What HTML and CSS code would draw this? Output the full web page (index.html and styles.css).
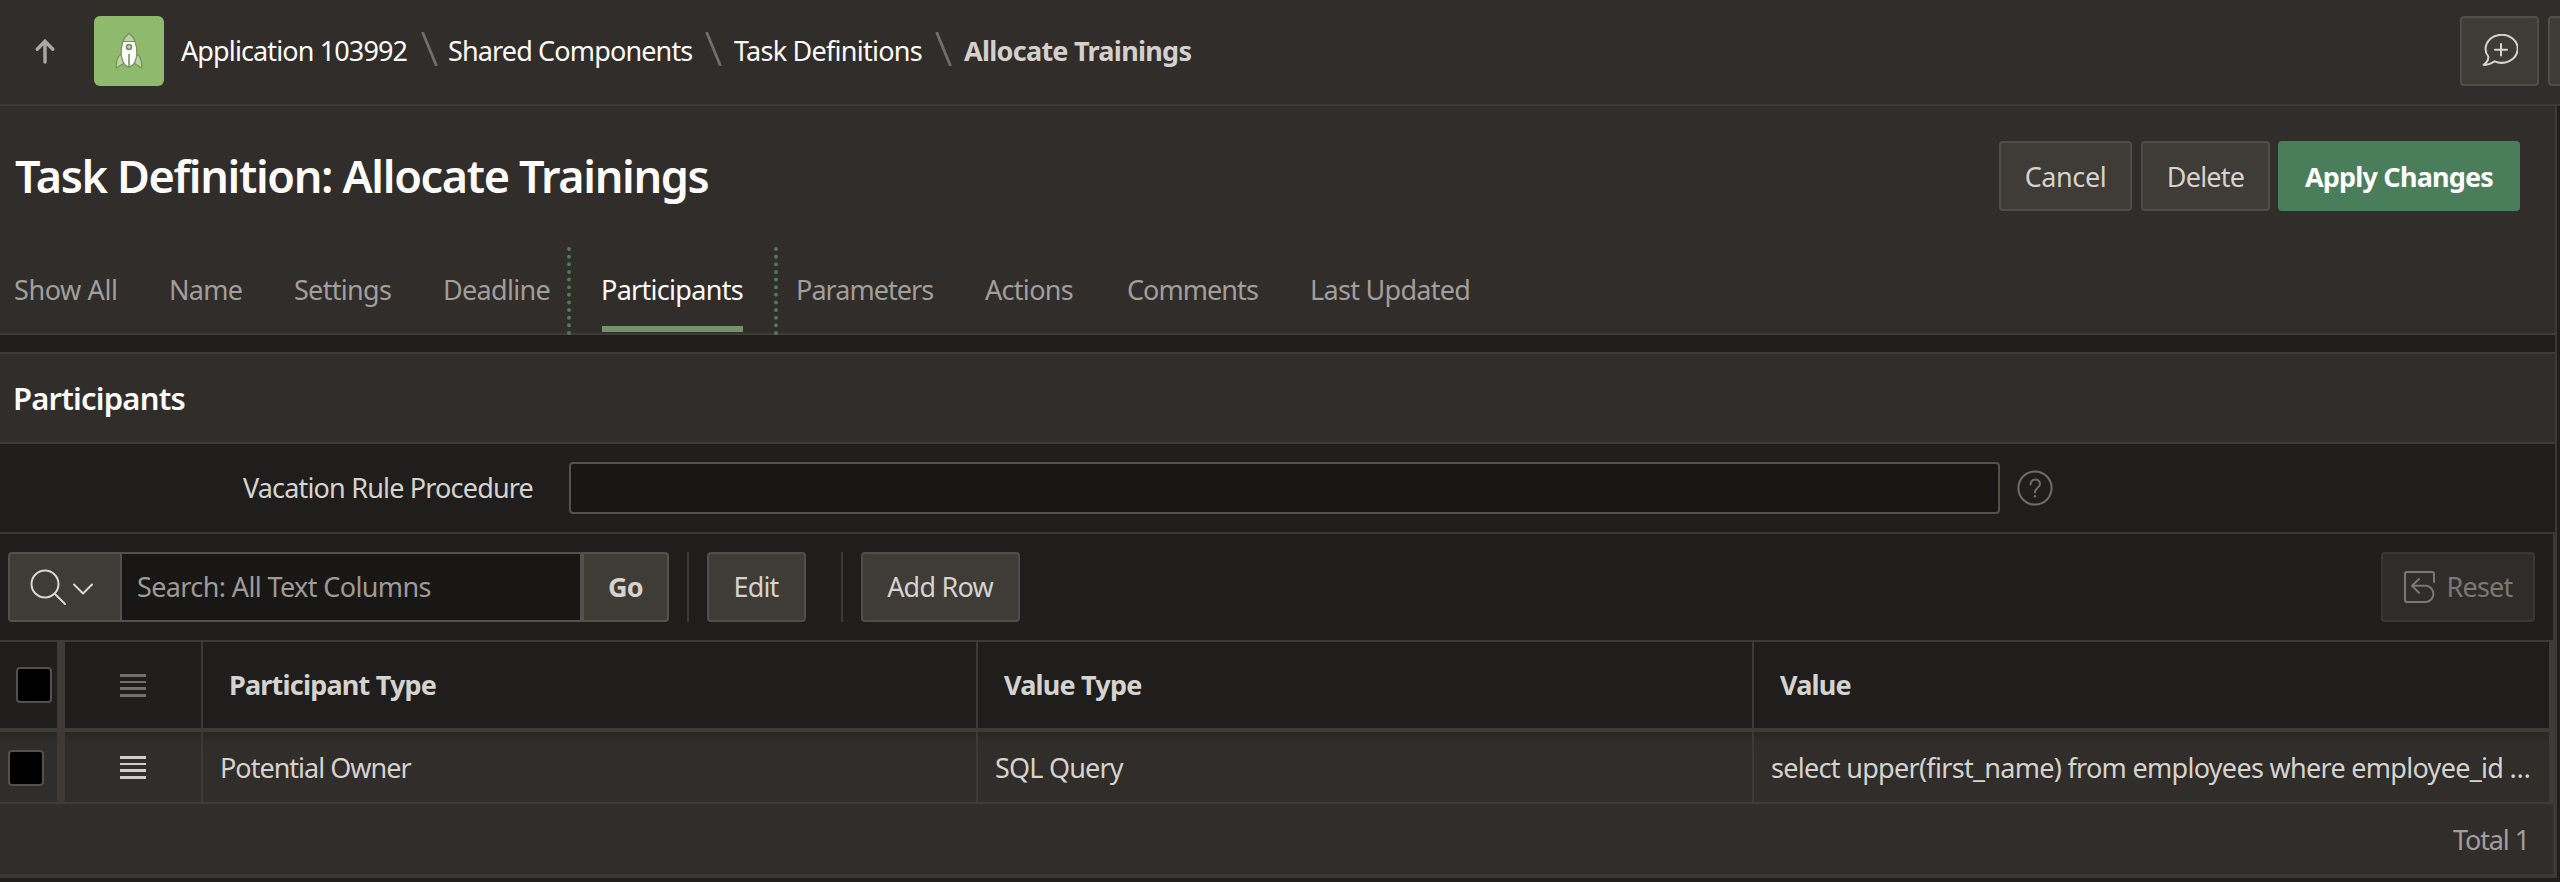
FILE: index.html
```html
<!DOCTYPE html>
<html lang="en">
<head>
<meta charset="utf-8">
<title>Task Definition: Allocate Trainings</title>
<link rel="stylesheet" href="styles.css">
</head>
<body>
<header class="topbar">
  <a class="up"><svg width="22" height="26" viewBox="0 0 22 26"><path d="M11 24V4M3.2 11.2L11 3.2l7.800 8" fill="none" stroke="#aaa7a5" stroke-width="3.400" stroke-linecap="round" stroke-linejoin="miter"/></svg></a>
  <span class="app-icon">
    <svg width="28" height="38" viewBox="0 0 28 38">
      <g stroke="#729457" stroke-width="1.200" stroke-linejoin="round">
        <path d="M7.500 21C3 24 1.200 27 1.200 36L8.500 31.500zM20.500 21c4.500 3 6.300 6 6.300 15l-7.300-4.500z" fill="#bcd5a8"/>
        <path d="M8 9.500h12c3 8 2.500 18-2.200 23.500q-3.800 3.500-7.600 0C5.500 27.500 5 17.500 8 9.500z" fill="#fff"/>
        <path d="M14 1.200c-3 2.400-5 5-6 8.300h12c-1-3.300-3-5.900-6-8.300z" fill="#bcd5a8"/>
        <circle cx="14" cy="15" r="2.500" fill="#bcd5a8" stroke-width="1.600"/>
        <path d="M14 22.500V35" stroke-width="1.600" stroke-linecap="round"/>
      </g>
    </svg>
  </span>
  <nav class="crumbs">
    <a class="crumb crumb-app">Application 103992</a>
    <svg class="slash" width="17" height="34" viewBox="0 0 17 34"><path d="M1.500 0L15.500 34" stroke="#726e6b" stroke-width="2.800"/></svg>
    <a class="crumb crumb-shared">Shared Components</a>
    <svg class="slash" width="17" height="34" viewBox="0 0 17 34"><path d="M1.500 0L15.500 34" stroke="#726e6b" stroke-width="2.800"/></svg>
    <a class="crumb crumb-tasks">Task Definitions</a>
    <svg class="slash" width="17" height="34" viewBox="0 0 17 34"><path d="M1.500 0L15.500 34" stroke="#726e6b" stroke-width="2.800"/></svg>
    <span class="crumb crumb-current">Allocate Trainings</span>
  </nav>
  <button class="btn btn-comment"><svg width="36" height="34" viewBox="0 0 36 34" fill="none" stroke="#d6d3d0" stroke-width="2" stroke-linejoin="round" stroke-linecap="round"><path d="M6.300 22.500A16 14 0 1 1 12.500 27.300C9.500 29.500 6 31.500 1.500 30.800C4.500 29 6.500 26 6.300 22.500z"/><path d="M19 10v11.500M13 15.700h12"/></svg></button>
  <button class="btn btn-next"></button>
</header>
<div class="page">
  <div class="title-bar">
    <h1>Task Definition: Allocate Trainings</h1>
    <button class="btn btn-cancel">Cancel</button>
    <button class="btn btn-delete">Delete</button>
    <button class="btn btn-apply">Apply Changes</button>
  </div>
  <nav class="tabs">
    <a class="tab show-all">Show All</a>
    <a class="tab">Name</a>
    <a class="tab">Settings</a>
    <a class="tab">Deadline</a>
    <a class="tab active">Participants</a>
    <a class="tab params">Parameters</a>
    <a class="tab">Actions</a>
    <a class="tab params">Comments</a>
    <a class="tab">Last Updated</a>
  </nav>
  <section class="region">
    <h2>Participants</h2>
    <div class="field">
      <label>Vacation Rule Procedure</label>
      <input class="field-input" type="text">
      <svg class="help" width="36" height="36" viewBox="0 0 36 36" fill="none" stroke="#6f6c69" stroke-width="2"><circle cx="18" cy="18" r="16.600"/><path d="M13.500 14.500c0-6.500 9.500-6.300 9.500-.6 0 4-5 3.600-5 8.600" stroke-linecap="round"/><circle cx="18" cy="26.300" r="1.300" fill="#6f6c69" stroke="none"/></svg>
    </div>
    <div class="grid">
      <div class="toolbar">
        <button class="btn btn-search"><svg width="64" height="38" viewBox="0 0 64 38" fill="none" stroke="#dad7d4" stroke-width="2" stroke-linecap="round" stroke-linejoin="round"><circle cx="15" cy="16" r="13.500"/><path d="M25 26L35 36M44 16.500l9 9 9-9"/></svg></button>
        <div class="search">Search: All Text Columns</div>
        <button class="btn btn-go">Go</button>
        <span class="divider"></span>
        <button class="btn btn-edit">Edit</button>
        <span class="divider divider-add"></span>
        <button class="btn btn-add">Add Row</button>
        <button class="btn btn-reset"><svg width="32" height="32" viewBox="0 0 32 32" fill="none" stroke="#7b7875" stroke-width="2" stroke-linecap="round" stroke-linejoin="round"><path d="M30 11V3q0-2-2-2H3Q1 1 1 3v26q0 2 2 2h19.500a8.200 8.200 0 0 0 0-16.200H8M15 8l-7 6.800 7 7"/></svg>Reset</button>
      </div>
      <div class="row head">
        <div class="cell check"><span class="box"></span></div>
        <div class="cell menu"><span class="lines"></span></div>
        <div class="cell type">Participant Type</div>
        <div class="cell">Value Type</div>
        <div class="cell last">Value</div>
      </div>
      <div class="row body">
        <div class="cell check"><span class="box"></span></div>
        <div class="cell menu"><span class="lines"></span></div>
        <div class="cell owner">Potential Owner</div>
        <div class="cell">SQL Query</div>
        <div class="cell last query">select upper(first_name) from employees where employee_id …</div>
      </div>
      <div class="total">Total 1</div>
    </div>
  </section>
</div>
</body>
</html>
```
FILE: styles.css
```css
* { box-sizing: border-box; }
body {
  margin: 0;
  height: 882px;
  overflow: hidden;
  background: #201e1c;
  color: #d5d3d0;
  font: 27px/36px "Noto Sans", "Open Sans", sans-serif;
  letter-spacing: -0.8px;
  white-space: nowrap;
}
svg { display: block; flex: none; }
h1, h2 { margin: 0; color: #fdfcfb; font-weight: 600; }

.btn {
  display: flex;
  flex: none;
  align-items: center;
  justify-content: center;
  height: 70px;
  padding: 0;
  border: 2px solid #524d48;
  border-radius: 4px;
  background: #3f3b36;
  color: #d5d3d0;
  font: inherit;
  letter-spacing: inherit;
}

/* Application bar */
.topbar {
  display: flex;
  align-items: flex-start;
  height: 106px;
  padding-top: 16px;
  border-bottom: 2px solid #3f3a37;
  background: #312d2a;
}
.up { padding: 22px 36px 0 34px; }
.app-icon {
  display: flex;
  align-items: center;
  justify-content: center;
  flex: none;
  width: 70px;
  height: 70px;
  margin-left: 2px;
  border-radius: 6px;
  background: #8fb96d;
}
.crumbs { display: flex; align-items: center; height: 70px; margin-left: 17px; flex: 1; }
.crumb { flex: none; color: #fdfcfb; }
.crumb-app { width: 240px; letter-spacing: -0.88px; }
.crumb-shared { width: 257px; margin-left: 10px; letter-spacing: -0.86px; }
.crumb-tasks { width: 201px; margin-left: 12px; letter-spacing: -0.75px; }
.crumb-current { margin-left: 12px; font-weight: 700; color: #d3d0ce; letter-spacing: -0.73px; }
.slash { margin-bottom: 4px; }
.btn-comment { width: 79px; margin-right: 9px; }
.btn-next { width: 12px; border-right: 0; border-radius: 4px 0 0 4px; }

/* Page title and actions */
.page { width: 2557px; border-right: 2px solid #3c3a34; }
.title-bar {
  display: flex;
  align-items: center;
  height: 141px;
  padding: 0 35px 1px 15px;
  background: #312d2a;
}
.title-bar h1 { flex: 1; font-size: 45px; line-height: 60px; letter-spacing: -1.35px; }
.title-bar .btn { padding-top: 2px; }
.btn-cancel { width: 133px; margin-right: 9px; letter-spacing: -0.4px; }
.btn-delete { width: 129px; margin-right: 8px; }
.btn-apply { width: 242px; border-color: #4a7d59; background: #4a7d59; color: #fff; font-weight: 700; }

/* Region tabs */
.tabs {
  display: grid;
  grid-template-columns: 155px 125px 149px 158px 195px 189px 142px 183px auto;
  height: 88px;
  padding-left: 14px;
  border-bottom: 2px solid #3f3b38;
  background: #312d2a;
}
.tab { color: #a19e9b; line-height: 86px; letter-spacing: -0.7px; }
.show-all { letter-spacing: -0.4px; }
.params { letter-spacing: -0.95px; }
.tab.active { position: relative; color: #fdfcfb; }
.tab.active::before {
  content: "";
  position: absolute;
  top: 0;
  left: -34px;
  width: 203px;
  height: 88px;
  border: dotted #4a7d59;
  border-width: 0 4px;
}
.tab.active::after {
  content: "";
  position: absolute;
  left: 1px;
  bottom: 1px;
  width: 141px;
  height: 6px;
  background: #75926a;
}

/* Participants region */
.region { margin-top: 17px; border-top: 2px solid #3f3b38; }
.region h2 {
  height: 90px;
  padding-left: 13px;
  border-bottom: 2px solid #3f3b38;
  background: #312d2a;
  font-size: 31px;
  line-height: 88px;
}
.field { display: flex; align-items: center; height: 90px; border-bottom: 2px solid #3c3a34; }
.field label { width: 533px; text-align: right; letter-spacing: -0.82px; }
.field-input {
  width: 1431px;
  height: 52px;
  margin: 0 17px 0 36px;
  border: 2px solid #574f49;
  border-radius: 4px;
  background: #191715;
}

/* Grid toolbar */
.grid { border-right: 2px solid #3c3a34; }
.toolbar { display: flex; align-items: center; height: 108px; padding: 0 18px 0 8px; border-bottom: 2px solid #3c3a34; }
.btn-search { width: 114px; padding-right: 7px; border-radius: 4px 0 0 4px; border-color: #57504a; }
.search {
  width: 458px;
  height: 70px;
  padding-left: 15px;
  border: solid #57504a;
  border-width: 2px 0;
  background: #191715;
  color: #9d9a97;
  line-height: 66px;
  letter-spacing: -0.62px;
}
.btn-go { width: 89px; border-width: 2px 2px 2px 4px; border-color: #57504a; border-radius: 0 4px 4px 0; font-weight: 700; }
.divider { width: 2px; height: 70px; margin: 0 18px; background: #3c3a34; }
.btn-edit { width: 99px; padding-right: 1px; }
.divider-add { margin-left: 35px; }
.btn-add { width: 159px; padding-right: 1px; }
.btn-reset { width: 154px; gap: 11px; margin-left: auto; border-color: #393633; background: #302c29; color: #7b7875; }

/* Grid rows */
.row {
  display: grid;
  grid-template-columns: 65px 138px 775px 776px 1fr;
  border-right: 4px solid #3f3b36;
}
.cell {
  display: flex;
  align-items: center;
  padding-left: 26px;
  border-right: 2px solid #3c3a34;
}
.cell.last { border-right: 0; }
.cell.check { border-right: 8px solid #3f3b36; }
.cell.menu { justify-content: center; padding: 0; }
.head { height: 90px; border-bottom: 4px solid #3f3b34; font-weight: 700; }
.head .check { padding-left: 16px; }
.body {
  height: 72px;
  border-bottom: 2px solid #3f3b38;
  background: linear-gradient(#292723, #2f2c29 10px, #312d2a 18px);
}
.body .cell { padding: 2px 0 0 17px; border-color: #3e3935; }
.body .check { padding-left: 8px; }
.body .menu { padding: 0; }
.body .owner { letter-spacing: -1px; }
.body .query { letter-spacing: -0.7px; }
.box { width: 36px; height: 36px; border: 2px solid #54504c; border-radius: 4px; background: #000; }
.lines {
  width: 26px;
  height: 23px;
  background: repeating-linear-gradient(#72706d 0 2.600px, transparent 2.600px 6.700px);
}
.body .lines { background: repeating-linear-gradient(#d0cecb 0 2.600px, transparent 2.600px 6.700px); }
.total {
  height: 74px;
  padding-right: 24px;
  border-bottom: 4px solid #3a3832;
  background: #312d2a;
  color: #a19e9b;
  line-height: 72px;
  letter-spacing: -1.1px;
  text-align: right;
}
```
